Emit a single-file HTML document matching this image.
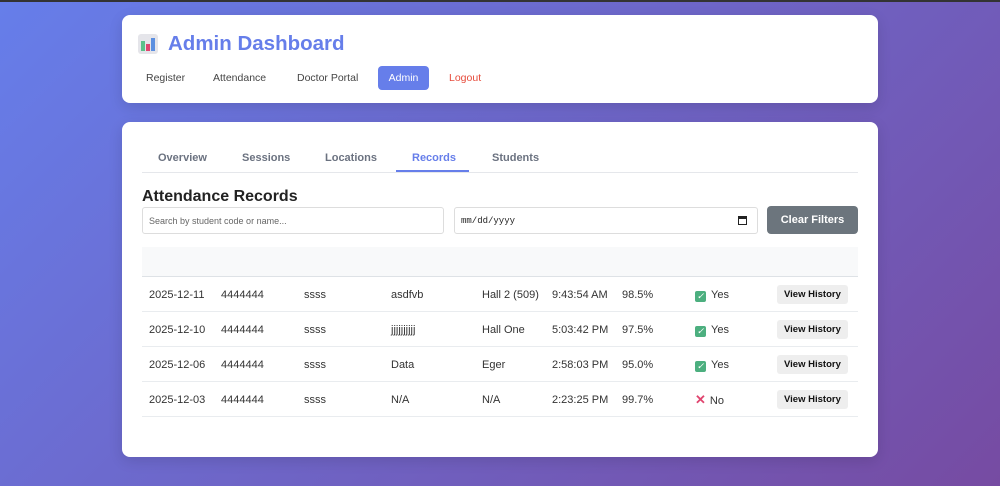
<!DOCTYPE html>
<html><head><meta charset="utf-8"><style>
*{box-sizing:border-box;margin:0;padding:0}
html,body{width:1000px;height:486px;overflow:hidden}
body{background:linear-gradient(135deg,#667eea 0%,#764ba2 100%);font-family:"Liberation Sans",sans-serif;position:relative;border-top:2px solid #333}
.card{position:absolute;left:122px;width:756px;background:#fff;border-radius:8px;box-shadow:0 4px 14px rgba(0,0,0,.12)}
.h{top:13px;height:88px}
.m{top:120px;height:335px}
.title{position:absolute;left:16px;top:17px;font-size:20.5px;font-weight:bold;color:#667eea;display:flex;align-items:center;gap:10px}
.ico{width:20px;height:20px;background:#e5e5ea;border-radius:3px;position:relative}
.ico i{position:absolute;bottom:3px;width:4px}
.nav{position:absolute;top:51px;left:0;font-size:10.5px;color:#444}
.nav span{position:absolute;top:0;padding:6px 0;border-radius:4px;white-space:nowrap}
.nav .a{background:#667eea;color:#fff;width:51px;text-align:center}
.nav .l{color:#e74c3c}
.abs{position:absolute}
.tab{top:30px;font-size:11px;font-weight:bold;color:#6b7280}
</style></head><body>
<div class="card h">
 <div class="title"><div class="ico"><i style="left:3px;height:10px;background:#5cc08a"></i><i style="left:8px;height:7px;background:#e0456f"></i><i style="left:13px;height:13px;background:#5b8fe0"></i></div>Admin Dashboard</div>
 <div class="nav"><span style="left:24px">Register</span><span style="left:91px">Attendance</span><span style="left:175px">Doctor Portal</span><span class="a" style="left:256px">Admin</span><span class="l" style="left:327px">Logout</span></div>
</div>
<div class="card m">
 <div class="abs tab" style="left:36px">Overview</div>
 <div class="abs tab" style="left:120px">Sessions</div>
 <div class="abs tab" style="left:203px">Locations</div>
 <div class="abs tab" style="left:290px;color:#667eea">Records</div>
 <div class="abs tab" style="left:370px">Students</div>
 <div class="abs" style="left:274px;top:48px;width:73px;height:2px;background:#667eea"></div>
 <div class="abs" style="left:20px;top:50px;width:716px;height:1px;background:#e5e7eb"></div>
 <div class="abs" style="left:20px;top:66px;font-size:16px;font-weight:bold;color:#222">Attendance Records</div>
 <div class="abs" style="left:20px;top:85px;width:302px;height:27px;border:1px solid #ddd;border-radius:3px;font-size:9px;color:#666;padding:8px 6px">Search by student code or name...</div>
 <div class="abs" style="left:332px;top:85px;width:304px;height:27px;border:1px solid #ddd;border-radius:3px;font-size:9px;color:#222;padding:8px 6px;font-family:'Liberation Mono',monospace">mm/dd/yyyy<span style="position:absolute;right:10px;top:8px;width:9px;height:9px;border:1.5px solid #222;border-top-width:3px"></span></div>
 <div class="abs" style="left:645px;top:84px;width:91px;height:28px;background:#6c757d;border-radius:4px;color:#fff;font-size:11px;font-weight:bold;text-align:center;line-height:28px">Clear Filters</div>
 <div class="abs" style="left:20px;top:125px;width:716px;height:30px;background:#f8f9fa;border-bottom:1px solid #dee2e6"></div>
 <div class="abs" style="left:20px;top:155px;width:716px;font-size:11px;color:#333">
  <style>.r{height:35px;border-bottom:1px solid #e9ecef;position:relative}.r span{position:absolute;top:12px}.vh{background:#eee;border-radius:3px;padding:4px 7px;font-weight:bold;font-size:9.5px;color:#111;top:8px!important}.ck{display:inline-block;width:11px;height:11px;background:#4caf7f;border-radius:2px;color:#fff;font-size:9px;line-height:11px;text-align:center;margin-right:5px;vertical-align:-1px}.x{color:#e0456f;font-weight:bold;font-size:13px;margin-right:4px}</style>
  <div class="r"><span style="left:7px">2025-12-11</span><span style="left:79px">4444444</span><span style="left:162px">ssss</span><span style="left:249px">asdfvb</span><span style="left:340px">Hall 2 (509)</span><span style="left:410px">9:43:54 AM</span><span style="left:480px">98.5%</span><span style="left:553px"><i class="ck">✓</i>Yes</span><span class="vh" style="left:635px">View History</span></div>
  <div class="r"><span style="left:7px">2025-12-10</span><span style="left:79px">4444444</span><span style="left:162px">ssss</span><span style="left:249px">jjjjjjjjjj</span><span style="left:340px">Hall One</span><span style="left:410px">5:03:42 PM</span><span style="left:480px">97.5%</span><span style="left:553px"><i class="ck">✓</i>Yes</span><span class="vh" style="left:635px">View History</span></div>
  <div class="r"><span style="left:7px">2025-12-06</span><span style="left:79px">4444444</span><span style="left:162px">ssss</span><span style="left:249px">Data</span><span style="left:340px">Eger</span><span style="left:410px">2:58:03 PM</span><span style="left:480px">95.0%</span><span style="left:553px"><i class="ck">✓</i>Yes</span><span class="vh" style="left:635px">View History</span></div>
  <div class="r"><span style="left:7px">2025-12-03</span><span style="left:79px">4444444</span><span style="left:162px">ssss</span><span style="left:249px">N/A</span><span style="left:340px">N/A</span><span style="left:410px">2:23:25 PM</span><span style="left:480px">99.7%</span><span style="left:553px;top:10px"><b class="x">✕</b>No</span><span class="vh" style="left:635px">View History</span></div>
 </div>
</div>
</body></html>
